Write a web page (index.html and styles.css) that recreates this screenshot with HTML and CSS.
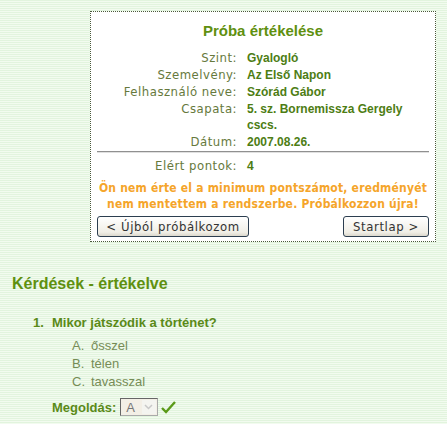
FILE: index.html
```html
<!DOCTYPE html>
<html lang="hu">
<head>
    <meta charset="UTF-8">
    <title>Próba értékelése</title>
    <link rel="stylesheet" href="styles.css">
</head>
<body>
    <div class="result">
        <h2>Próba értékelése</h2>
        <table class="info">
            <tr><td class="label">Szint:</td><td class="value">Gyalogló</td></tr>
            <tr><td class="label">Szemelvény:</td><td class="value">Az Első Napon</td></tr>
            <tr><td class="label">Felhasználó neve:</td><td class="value">Szórád Gábor</td></tr>
            <tr><td class="label">Csapata:</td><td class="value">5. sz. Bornemissza Gergely cscs.</td></tr>
            <tr><td class="label">Dátum:</td><td class="value">2007.08.26.</td></tr>
        </table>
        <hr>
        <table class="info">
            <tr><td class="label">Elért pontok:</td><td class="value">4</td></tr>
        </table>
        <p class="warning">Ön nem érte el a minimum pontszámot, eredményét nem mentettem a rendszerbe. Próbálkozzon újra!</p>
        <div class="buttons">
            <button class="back">&lt; Újból próbálkozom</button>
            <button class="start">Startlap &gt;</button>
        </div>
    </div>

    <h1>Kérdések - értékelve</h1>

    <ol class="questions">
        <li><span class="question">Mikor játszódik a történet?</span>
            <ol class="answers">
                <li>ősszel</li>
                <li>télen</li>
                <li>tavasszal</li>
            </ol>
            <div class="solution">
                Megoldás:
                <span class="select">A<span class="arrow"><svg width="9" height="6" viewBox="0 0 9 6"><path d="M1 1 L4.5 4.5 L8 1" fill="none" stroke="#c8c8c8" stroke-width="1.5"/></svg></span></span>
                <svg class="check" width="15" height="13" viewBox="0 0 15 13"><path d="M1 7 L5 11 L14 1" fill="none" stroke="#5a9a18" stroke-width="2.4"/></svg>
            </div>
        </li>
    </ol>
</body>
</html>
```

FILE: styles.css
```css
body {
    margin: 0;
    padding: 11px 0 0;
    font-family: "Liberation Sans", Arial, sans-serif;
    background: repeating-linear-gradient(180deg, #e2f4de 0, #e2f4de 1px, #f2fbef 1px, #f2fbef 2px);
    color: #5a8a18;
    min-height: 424px;
}
.result {
    margin-left: 90px;
    width: 332px;
    padding: 0 6px 3px;
    background: white;
    border: 1px dotted #4a5a3a;
}
.result h2 {
    margin: 0;
    padding: 10px 0 11px;
    text-align: center;
    font-size: 15px;
    color: #5f9010;
}
.info {
    border-collapse: collapse;
    font-size: 12px;
}
.info td {
    padding: 0 0 1px;
    line-height: 16px;
    vertical-align: top;
}
.label {
    width: 140px;
    text-align: right;
    padding-right: 10px !important;
    font-family: "DejaVu Sans Condensed", "DejaVu Sans", Verdana, sans-serif;
    font-size: 13px;
    letter-spacing: 0.5px;
    color: #66793c;
}
.value {
    font-weight: bold;
    color: #4d7d14;
    width: 180px;
}
.result hr {
    margin: 0 0 5px;
    border: 0;
    border-top: 1px solid #909090;
    border-bottom: 1px solid #e0e0e0;
}
.warning {
    margin: 5px -4px 4px;
    text-align: center;
    font-family: "DejaVu Sans Condensed", "DejaVu Sans", Verdana, sans-serif;
    font-weight: bold;
    font-size: 12px;
    letter-spacing: 0.2px;
    line-height: 16px;
    color: #f5a52a;
}
.buttons {
    display: flex;
    justify-content: space-between;
    padding-bottom: 1px;
}
.buttons button {
    font-family: "DejaVu Sans Condensed", "DejaVu Sans", Verdana, sans-serif;
    font-size: 13px;
    letter-spacing: 0.6px;
    color: #333;
    height: 21px;
    padding: 0;
    border: 1px solid #2c3e50;
    border-radius: 3px;
    background: linear-gradient(180deg, #ffffff, #f0eee6 80%, #dcd8cc);
}
.back {
    width: 152px;
}
.start {
    width: 86px;
}
h1 {
    margin: 33px 0 0 12px;
    font-size: 16px;
    color: #5f9010;
}
.questions {
    margin: 22px 0 0;
    padding-left: 33px;
    list-style: none;
    counter-reset: q;
    font-size: 13px;
    font-weight: bold;
    color: #5a8a18;
}
.questions > li {
    counter-increment: q;
}
.questions > li::before {
    content: counter(q) ".";
    display: inline-block;
    width: 19px;
}
.answers {
    margin: 7px 0 0;
    padding-left: 39px;
    list-style: none;
    counter-reset: a;
    font-weight: normal;
    color: #768c56;
}
.answers li {
    counter-increment: a;
    line-height: 18px;
}
.answers li::before {
    content: counter(a, upper-alpha) ".";
    display: inline-block;
    width: 19px;
}
.solution {
    margin: 7px 0 0 19px;
    display: flex;
    align-items: center;
    gap: 4px;
}
.select {
    display: inline-flex;
    align-items: center;
    gap: 7px;
    width: 31px;
    height: 16px;
    padding-left: 5px;
    font-weight: normal;
    color: #777;
    background: #f3efe6;
    border: 1px solid #aaa;
    border-top-color: #666;
    border-left-color: #666;
}
.arrow {
    display: inline-flex;
    align-items: center;
    justify-content: center;
    width: 14px;
    height: 14px;
    background: #f4f4f0;
}
.check {
    margin-left: -1px;
}
```
